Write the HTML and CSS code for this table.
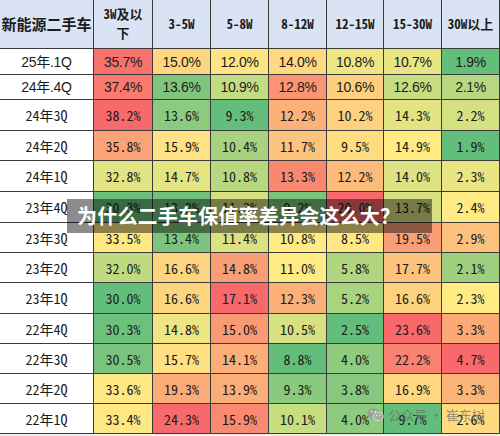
FILE: index.html
```html
<!DOCTYPE html>
<html lang="zh-CN">
<head>
    <meta charset="UTF-8">
    <meta name="viewport" content="width=device-width, initial-scale=1.0">
    <title>新能源二手车保值率</title>
    <link rel="stylesheet" href="styles.css">
</head>
<body>
    <div class="sheet">
        <div class="grid">
            <div class="cell head first">新能源二手车</div>
            <div class="cell head">3W及以<br>下</div>
            <div class="cell head">3-5W</div>
            <div class="cell head">5-8W</div>
            <div class="cell head">8-12W</div>
            <div class="cell head">12-15W</div>
            <div class="cell head">15-30W</div>
            <div class="cell head">30W以上</div>

            <div class="cell label new">25年.1Q</div>
            <div class="cell new" style="background:#f8716c">35.7%</div>
            <div class="cell new" style="background:#ffd680">15.0%</div>
            <div class="cell new" style="background:#fee483">12.0%</div>
            <div class="cell new" style="background:#ffd980">14.0%</div>
            <div class="cell new" style="background:#efe683">10.8%</div>
            <div class="cell new" style="background:#e8e583">10.7%</div>
            <div class="cell new" style="background:#63be7b">1.9%</div>

            <div class="cell label new">24年.4Q</div>
            <div class="cell new" style="background:#f97a6f">37.4%</div>
            <div class="cell new" style="background:#7fc67c">13.6%</div>
            <div class="cell new" style="background:#c3dc81">10.9%</div>
            <div class="cell new" style="background:#fa9473">12.8%</div>
            <div class="cell new" style="background:#fdcf7e">10.6%</div>
            <div class="cell new" style="background:#c6dd81">12.6%</div>
            <div class="cell new" style="background:#b6d880">2.1%</div>

            <div class="cell label">24年3Q</div>
            <div class="cell" style="background:#f8696b">38.2%</div>
            <div class="cell" style="background:#8cca7e">13.6%</div>
            <div class="cell" style="background:#63be7b">9.3%</div>
            <div class="cell" style="background:#fbb179">12.2%</div>
            <div class="cell" style="background:#fdd17f">10.2%</div>
            <div class="cell" style="background:#e2e383">14.3%</div>
            <div class="cell" style="background:#d4e082">2.2%</div>

            <div class="cell label">24年2Q</div>
            <div class="cell" style="background:#fba276">35.8%</div>
            <div class="cell" style="background:#ffe283">15.9%</div>
            <div class="cell" style="background:#a8d27f">10.4%</div>
            <div class="cell" style="background:#fdc47d">11.7%</div>
            <div class="cell" style="background:#fedd81">9.5%</div>
            <div class="cell" style="background:#ffeb84">14.9%</div>
            <div class="cell" style="background:#63be7b">1.9%</div>

            <div class="cell label">24年1Q</div>
            <div class="cell" style="background:#e2e383">32.8%</div>
            <div class="cell" style="background:#e5e483">14.7%</div>
            <div class="cell" style="background:#b8d880">10.8%</div>
            <div class="cell" style="background:#f98870">13.3%</div>
            <div class="cell" style="background:#fcbb7b">12.2%</div>
            <div class="cell" style="background:#dde283">14.0%</div>
            <div class="cell" style="background:#eae583">2.3%</div>

            <div class="cell label">23年4Q</div>
            <div class="cell" style="background:#6ac07b">30.3%</div>
            <div class="cell" style="background:#71c27c">13.2%</div>
            <div class="cell" style="background:#d4e082">11.3%</div>
            <div class="cell" style="background:#7bc47c">9.2%</div>
            <div class="cell" style="background:#f8696b">20.0%</div>
            <div class="cell" style="background:#d8e182">13.7%</div>
            <div class="cell" style="background:#ffeb84">2.4%</div>

            <div class="cell label">23年3Q</div>
            <div class="cell" style="background:#ffe884">33.5%</div>
            <div class="cell" style="background:#7dc57c">13.4%</div>
            <div class="cell" style="background:#dce182">11.4%</div>
            <div class="cell" style="background:#ffeb84">10.8%</div>
            <div class="cell" style="background:#ffe884">8.5%</div>
            <div class="cell" style="background:#fa9f75">19.5%</div>
            <div class="cell" style="background:#fcc17c">2.9%</div>

            <div class="cell label">23年2Q</div>
            <div class="cell" style="background:#bfdb81">32.0%</div>
            <div class="cell" style="background:#fed57f">16.6%</div>
            <div class="cell" style="background:#fa9e75">14.8%</div>
            <div class="cell" style="background:#ffeb84">11.0%</div>
            <div class="cell" style="background:#b2d680">5.8%</div>
            <div class="cell" style="background:#fcc37c">17.7%</div>
            <div class="cell" style="background:#9ecf7f">2.1%</div>

            <div class="cell label">23年1Q</div>
            <div class="cell" style="background:#63be7b">30.0%</div>
            <div class="cell" style="background:#fed57f">16.6%</div>
            <div class="cell" style="background:#f8696b">17.1%</div>
            <div class="cell" style="background:#fbb078">12.3%</div>
            <div class="cell" style="background:#a8d37f">5.2%</div>
            <div class="cell" style="background:#fdd27f">16.6%</div>
            <div class="cell" style="background:#ffeb84">2.3%</div>

            <div class="cell label">22年4Q</div>
            <div class="cell" style="background:#6dc17b">30.3%</div>
            <div class="cell" style="background:#ede683">14.8%</div>
            <div class="cell" style="background:#fa9a74">15.0%</div>
            <div class="cell" style="background:#d7e082">10.5%</div>
            <div class="cell" style="background:#63be7b">2.5%</div>
            <div class="cell" style="background:#f8696b">23.6%</div>
            <div class="cell" style="background:#fbaa77">3.3%</div>

            <div class="cell label">22年3Q</div>
            <div class="cell" style="background:#79c47c">30.5%</div>
            <div class="cell" style="background:#ffe183">15.7%</div>
            <div class="cell" style="background:#fbae78">14.1%</div>
            <div class="cell" style="background:#63be7b">8.8%</div>
            <div class="cell" style="background:#8ecb7e">4.0%</div>
            <div class="cell" style="background:#f98370">22.2%</div>
            <div class="cell" style="background:#f8696b">4.7%</div>

            <div class="cell label">22年2Q</div>
            <div class="cell" style="background:#ffe784">33.6%</div>
            <div class="cell" style="background:#fbab77">19.3%</div>
            <div class="cell" style="background:#fbaf78">13.9%</div>
            <div class="cell" style="background:#8aca7e">9.3%</div>
            <div class="cell" style="background:#86c87d">3.8%</div>
            <div class="cell" style="background:#fed880">16.9%</div>
            <div class="cell" style="background:#fbb579">3.3%</div>

            <div class="cell label">22年1Q</div>
            <div class="cell" style="background:#ffe784">33.4%</div>
            <div class="cell" style="background:#f8696b">24.3%</div>
            <div class="cell" style="background:#f98a71">15.9%</div>
            <div class="cell" style="background:#c7dd81">10.1%</div>
            <div class="cell" style="background:#8ecb7e">4.0%</div>
            <div class="cell" style="background:#63be7b">9.7%</div>
            <div class="cell" style="background:#ffda80">2.6%</div>
        </div>

        <div class="caption">为什么二手车保值率差异会这么大？</div>

        <div class="mark">
            <svg class="mark-icon" viewBox="0 0 18 16" width="17" height="15">
                <ellipse cx="7" cy="6.5" rx="6.5" ry="5.5" fill="#9a9a9a"/>
                <path d="M3 10.5 L2.2 13 L5.2 11.5 Z" fill="#9a9a9a"/>
                <ellipse cx="12" cy="10" rx="5.5" ry="4.6" fill="#a8a8a8" stroke="#f4f4f4" stroke-width="0.8"/>
                <path d="M14.8 13.6 L15.8 15.6 L13 14.3 Z" fill="#a8a8a8"/>
                <circle cx="5" cy="5" r="0.9" fill="#fff"/>
                <circle cx="9" cy="5" r="0.9" fill="#fff"/>
                <circle cx="10.3" cy="9" r="0.7" fill="#fff"/>
                <circle cx="13.7" cy="9" r="0.7" fill="#fff"/>
            </svg>
            <span>公众号 · 崔东树</span>
        </div>
    </div>
</body>
</html>
```

FILE: styles.css
```css
body {
    margin: 0;
    background-color: #efefef;
    font-family: "Noto Sans CJK SC", sans-serif;
    color: #1c1c1c;
}
.sheet {
    position: relative;
    width: 500px;
}
.grid {
    display: grid;
    grid-template-columns: 93px 58px 57px 57px 57px 56px 57px 57px;
    grid-template-rows: 48px 25px 24px 30px 29px 30px 30px 29px 29px 30px 29px 29px 29px 29px;
    gap: 1px;
    padding: 0 1px 1px 0;
    background-color: #3a3a3a;
}
.cell {
    display: flex;
    align-items: center;
    justify-content: center;
    text-align: center;
    background-color: #fff;
    font-family: "Noto Sans Mono CJK SC", "Noto Sans CJK SC", monospace;
    font-size: 14px;
    line-height: 1;
}
.cell.head {
    background-color: #dae3f3;
    font-size: 13px;
    font-weight: bold;
    line-height: 1.45;
}
.cell.head.first {
    font-family: "Noto Sans CJK SC", sans-serif;
    font-size: 15px;
}
.cell.new {
    font-family: "Liberation Sans", "Noto Sans CJK SC", sans-serif;
    font-size: 14px;
    letter-spacing: -0.3px;
}
.caption {
    position: absolute;
    top: 199px;
    left: 67px;
    width: 355px;
    height: 34px;
    padding-left: 10px;
    background-color: rgba(0, 0, 0, 0.45);
    color: #fff;
    font-size: 20px;
    font-weight: bold;
    line-height: 34px;
    letter-spacing: 0.2px;
}
.mark {
    position: absolute;
    top: 405px;
    left: 367px;
    display: flex;
    align-items: center;
    gap: 4px;
    color: rgba(110, 110, 110, 0.75);
    font-size: 13px;
}
.mark-icon {
    opacity: 0.8;
}
```
